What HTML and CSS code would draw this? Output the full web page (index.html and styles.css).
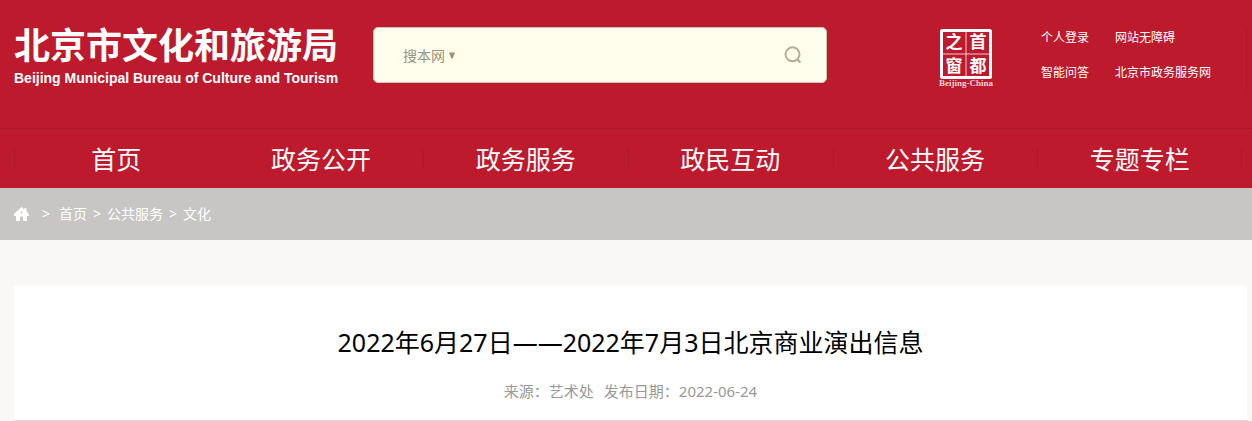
FILE: index.html
```html
<!DOCTYPE html>
<html lang="zh-CN">
<head>
<meta charset="utf-8">
<meta name="viewport" content="width=device-width, initial-scale=1">
<title>北京市文化和旅游局</title>
<link rel="stylesheet" href="styles.css">
</head>
<body>
<header class="header">
  <div class="masthead">
    <a class="brand" href="#">
      <span class="brand-name">北京市文化和旅游局</span>
      <span class="brand-en">Beijing Municipal Bureau of Culture and Tourism</span>
    </a>
    <form class="search" role="search">
      <label class="scope">
        <select class="scope-select" aria-label="搜索范围"><option>搜本网</option></select>
        <svg class="scope-arrow" viewBox="0 0 6 7" aria-hidden="true"><path d="M0 .5h6L3.7 6.5H2.3z"/></svg>
      </label>
      <input class="search-input" type="text" aria-label="搜索内容">
      <button class="search-button" type="submit" aria-label="搜索">
        <svg class="search-icon" viewBox="0 0 18 18" aria-hidden="true"><circle cx="8.500" cy="8.300" r="7"/><path d="M13 13l3.500 3.500"/></svg>
      </button>
    </form>
    <a class="seal" href="#" aria-label="首都之窗">
      <svg class="seal-art" viewBox="0 0 58 62" aria-hidden="true">
        <rect class="seal-frame" x="4.500" y="3.500" width="49" height="47" rx="1"/>
        <path class="seal-grid" d="M29 5v44M6 27h46"/>
        <text class="seal-char" x="17" y="21">之</text>
        <text class="seal-char" x="41" y="21">首</text>
        <text class="seal-char" x="17" y="45">窗</text>
        <text class="seal-char" x="41" y="45">都</text>
        <text class="seal-caption" x="29" y="59">Beijing-China</text>
      </svg>
    </a>
    <div class="quick-links">
      <a href="#">个人登录</a><a href="#">网站无障碍</a>
      <a href="#">智能问答</a><a href="#">北京市政务服务网</a>
    </div>
  </div>
  <nav class="nav">
    <ul class="nav-list">
      <li class="nav-item"><a href="#">首页</a></li>
      <li class="nav-item nav-item-plain"><a href="#">政务公开</a></li>
      <li class="nav-item"><a href="#">政务服务</a></li>
      <li class="nav-item"><a href="#">政民互动</a></li>
      <li class="nav-item"><a href="#">公共服务</a></li>
      <li class="nav-item"><a href="#">专题专栏</a></li>
    </ul>
  </nav>
</header>
<nav class="crumbs" aria-label="面包屑">
  <svg class="home-icon" viewBox="0 0 15 15" aria-hidden="true"><path fill-rule="evenodd" d="M7.500 0L10 2.300V1.200h2.500v3.300L15 7v2h-2v5H9V9.500H6V14H2V9H0V7zM6.700 4.500v2h1.600v-2z"/></svg>
  <span class="crumb-first">&gt;</span>
  <a href="#">首页</a><span>&gt;</span><a href="#">公共服务</a><span>&gt;</span><a href="#">文化</a>
</nav>
<main class="article">
  <h1 class="title">2022年6月27日——2022年7月3日北京商业演出信息</h1>
  <p class="meta"><span>来源：艺术处</span><span>发布日期：2022-06-24</span></p>
</main>
</body>
</html>
```
FILE: styles.css
```css
* { box-sizing: border-box; }

body {
  margin: 0;
  background: #f9f8f6;
  color: #000;
  font-family: "Noto Sans", "Noto Sans CJK SC", sans-serif;
}

a { color: inherit; text-decoration: none; }

.header { background: #bd1a2d; color: #fff; }

.masthead {
  display: flex;
  align-items: flex-start;
  min-height: 128px;
  margin: 0 5px 0 14px;
  padding-top: 27px;
}

.brand {
  display: flex;
  flex-direction: column;
  gap: 10px;
  flex: none;
  width: 359px;
}

.brand-name {
  font-family: "Noto Sans CJK SC", sans-serif;
  font-size: 36px;
  font-weight: 700;
  line-height: 32px;
}

.brand-en {
  font-family: "Liberation Sans", sans-serif;
  font-size: 14px;
  font-weight: 700;
  line-height: 18px;
  white-space: nowrap;
}

.search {
  display: flex;
  align-items: center;
  flex: 0 1 454px;
  height: 56px;
  padding: 0 24px 0 29px;
  border: 1px solid #c9c3b4;
  border-radius: 5px;
  background: #fffeed;
  color: #96957f;
}

.scope { display: flex; align-items: center; gap: 4px; }

.scope-select {
  appearance: none;
  padding: 0;
  border: 0;
  background: none;
  color: inherit;
  font: 14px/20px "Noto Sans CJK SC", sans-serif;
}

.scope-arrow { width: 6px; height: 7px; fill: currentColor; }

.search-input {
  flex: 1;
  min-width: 0;
  height: 40px;
  border: 0;
  outline: 0;
  background: none;
  font: 14px/20px "Noto Sans CJK SC", sans-serif;
}

.search-button { display: flex; padding: 0; border: 0; background: none; }

.search-icon {
  width: 18px;
  height: 18px;
  fill: none;
  stroke: #b0af9a;
  stroke-width: 2;
}

.seal { flex: none; margin-left: auto; }
.seal-art { display: block; width: 58px; height: 62px; }
.seal-frame { fill: none; stroke: #fff; stroke-width: 3; }
.seal-grid { stroke: #f3c9ce; stroke-width: 1; }

.seal-char {
  fill: #fff;
  font: 700 17px "Noto Sans CJK SC", sans-serif;
  text-anchor: middle;
}

.seal-caption {
  fill: #f6d3d7;
  font: 700 9px "Liberation Serif", serif;
  text-anchor: middle;
}

.quick-links {
  display: grid;
  grid-template-columns: 50px auto;
  column-gap: 24px;
  row-gap: 15px;
  width: 206px;
  height: 68px;
  margin-left: 46px;
  padding-top: 1px;
  border-right: 1px solid #b3182a;
  align-content: start;
  font-size: 12px;
  line-height: 20px;
  white-space: nowrap;
}

.nav { border-top: 1px solid #a61a29; }

.nav-list {
  display: grid;
  grid-template-columns: repeat(6, 1fr);
  height: 59px;
  margin: 0 10px 0 14px;
  padding: 0;
  list-style: none;
}

.nav-item {
  display: flex;
  align-items: center;
  justify-content: center;
  background: linear-gradient(#a61a29, #a61a29) left center / 1px 20px no-repeat;
  font-size: 25px;
  line-height: 36px;
}

.nav-item:last-child {
  background:
    linear-gradient(#a61a29, #a61a29) left center / 1px 20px no-repeat,
    linear-gradient(#a61a29, #a61a29) right center / 1px 20px no-repeat;
}

.nav-item-plain { background: none; }

.crumbs {
  display: flex;
  align-items: center;
  gap: 6px;
  height: 52px;
  padding: 0 14px;
  background: #c8c6c4;
  color: #fff;
  font-size: 14px;
  line-height: 20px;
}

.home-icon { width: 15px; height: 15px; fill: #fff; }
.crumb-first { margin: 0 3px 0 7px; }

.article {
  margin: 46px 5px 0 14px;
  padding: 38px 20px 18px;
  border-bottom: 1px solid #dcdcdc;
  background: #fff;
  text-align: center;
}

.title { margin: 0; font-size: 25px; font-weight: 400; line-height: 36px; }

.meta {
  display: flex;
  justify-content: center;
  gap: 10px;
  margin: 20px 0 0;
  color: #999;
  font-size: 15px;
  line-height: 22px;
}
```
